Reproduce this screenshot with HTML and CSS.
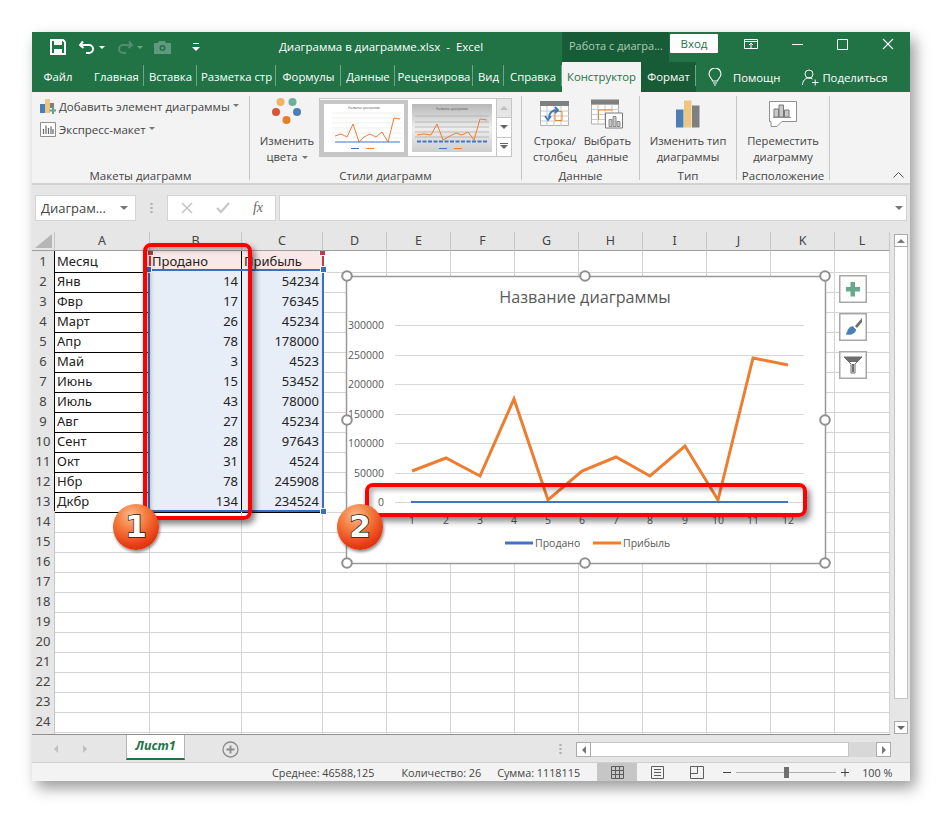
FILE: index.html
```html
<!DOCTYPE html>
<html lang="ru">
<head>
<meta charset="utf-8">
<title>Диаграмма в диаграмме.xlsx - Excel</title>
<link rel="stylesheet" href="styles.css">
</head>
<body>
<div class="window">
  <header class="titlebar">
    <div class="qat">
      <svg class="qi save" width="16" height="16" viewBox="0 0 16 16"><path d="M1 1h12l2 2v12H1z" fill="none" stroke="#fff" stroke-width="2"/><path d="M4 1h8v5H4zM4 10h8v5H4z" fill="#fff"/></svg>
      <svg class="qi undo" width="16" height="14" viewBox="0 0 16 14"><path d="M4 1.500 1 5l3.500 3M1.500 5H10a4 4 0 0 1 0 8H7" fill="none" stroke="#fff" stroke-width="2"/></svg>
      <span class="caret c1"></span>
      <svg class="qi redo" width="16" height="14" viewBox="0 0 16 14"><path d="M12 1.500 15 5l-3.500 3M14.500 5H6a4 4 0 0 0 0 8h3" fill="none" stroke="#4f8f6d" stroke-width="2"/></svg>
      <span class="caret c2"></span>
      <svg class="qi cam" width="17" height="13" viewBox="0 0 17 13"><path d="M0 2h4l1-2h6l1 2h5v11H0z" fill="#5f9a7c"/><circle cx="8.500" cy="7" r="3" fill="#217346"/><circle cx="8.500" cy="7" r="1.500" fill="#5f9a7c"/></svg>
      <svg class="qi cust" width="8" height="9" viewBox="0 0 8 9"><path d="M1 .5h6" stroke="#fff"/><path d="M0 4h8L4 8z" fill="#fff"/></svg>
    </div>
    <div class="doc">Диаграмма в диаграмме.xlsx&nbsp; -&nbsp; Excel</div>
    <div class="context">Работа с диагра...</div>
    <button class="login">Вход</button>
    <div class="winctl">
      <svg width="14" height="11" viewBox="0 0 14 11"><path d="M.5.500h13v9H.5zM.5 2.500h13M7 9V4M5 6l2-2 2 2" fill="none" stroke="#fff"/></svg>
      <svg width="11" height="3" viewBox="0 0 11 3"><path d="M0 1.500h11" stroke="#fff"/></svg>
      <svg width="11" height="11" viewBox="0 0 11 11"><path d="M.5.500h10v10H.5z" fill="none" stroke="#fff"/></svg>
      <svg width="12" height="12" viewBox="0 0 12 12"><path d="M1 1l10 10M11 1 1 11" stroke="#fff" stroke-width="1.100"/></svg>
    </div>
  </header>

  <nav class="tabs">
    <div class="tab">Файл</div>
    <div class="tab sep main">Главная</div>
    <div class="tab sep">Вставка</div>
    <div class="tab sep">Разметка стр</div>
    <div class="tab sep">Формулы</div>
    <div class="tab sep">Данные</div>
    <div class="tab sep">Рецензирова</div>
    <div class="tab sep">Вид</div>
    <div class="tab sep">Справка</div>
    <div class="tab active">Конструктор</div>
    <div class="tab sep dark">Формат</div>
    <div class="help">
      <svg width="14" height="18" viewBox="0 0 14 18"><path d="M4.500 13c0-2-3.500-3.500-3.500-7a6 6 0 0 1 12 0c0 3.500-3.500 5-3.500 7zM5 15h4M6 17h2" fill="none" stroke="#fff" stroke-width="1.100"/></svg>
      <span class="helpt">Помощн</span>
      <svg class="person" width="17" height="17" viewBox="0 0 17 17"><circle cx="7" cy="5" r="4" fill="none" stroke="#fff"/><path d="M.5 16c0-4 2.500-7 6.500-7 1.500 0 2.500.4 3.500 1M10 13.500h6.500M13.200 10.500v6" fill="none" stroke="#fff"/></svg>
      <span>Поделиться</span>
    </div>
  </nav>

  <section class="ribbon">
    <div class="group g1">
      <div class="gbody stack">
        <div class="rline">
          <svg width="16" height="15" viewBox="0 0 16 15"><path d="M0 5h5v9H0z" fill="#4a7fb5"/><path d="M5 0h5v14H5z" fill="#edc77f"/><path d="M10 4h4v5h-4z" fill="#7f7f7f"/><path d="M12 8h2v2.500h2.500v2H14V15h-2v-2.500H9.500v-2H12z" fill="#5ea58a"/></svg>
          <span>Добавить элемент диаграммы</span><span class="dd"></span>
        </div>
        <div class="rline">
          <svg width="16" height="15" viewBox="0 0 16 15"><path d="M.5.500h15v14H.5z" fill="#fff" stroke="#8f8f8f"/><path d="M3.500 12V7M6 12V3.500M8.500 12V6M11 12V4.500M13 12V7" stroke="#666" stroke-width="1.200"/></svg>
          <span>Экспресс-макет</span><span class="dd"></span>
        </div>
      </div>
      <div class="glabel">Макеты диаграмм</div>
    </div>
    <div class="group g2">
      <div class="gbody row2">
        <div class="bigbtn colors">
          <svg width="30" height="28" viewBox="0 0 30 28"><circle cx="8.500" cy="5" r="4" fill="#edb465"/><circle cx="20.500" cy="5" r="4" fill="#6fae9a"/><circle cx="4" cy="15" r="4" fill="#d9553a"/><circle cx="25" cy="15" r="4" fill="#4a7fb5"/><circle cx="14.500" cy="23" r="4" fill="#e87d25"/></svg>
          <span class="lab">Изменить<br>цвета<span class="dd"></span></span>
        </div>
        <div class="gallery">
          <div class="thumb sel">
            <svg width="80" height="48" viewBox="0 0 80 48"><rect width="80" height="48" fill="#fff"/><text class="tiny" x="40" y="5">Название диаграммы</text><path d="M8 9h70M8 14h70M8 19h70M8 24h70M8 29h70M8 34h70" stroke="#e6e6e6" stroke-width=".6"/><polyline points="11,32 17,30 23,33 29,20 35,38 40,33 46,30 52,33 58,28 64,38 70,14 76,15" fill="none" stroke="#ed7d31" stroke-width="1"/><path d="M11 38h65" stroke="#4472c4"/><path d="M27 44.500h8" stroke="#4472c4"/><path d="M42 44.500h8" stroke="#ed7d31"/></svg>
          </div>
          <div class="thumb">
            <svg width="80" height="48" viewBox="0 0 80 48"><defs><linearGradient id="tg" x1="0" x2="0" y1="0" y2="1"><stop offset="0" stop-color="#b8b8b8"/><stop offset=".5" stop-color="#eeeeee"/><stop offset="1" stop-color="#cdcdcd"/></linearGradient></defs><rect width="80" height="48" fill="url(#tg)"/><text class="tiny" x="40" y="6">Название диаграммы</text><path d="M3 12h74M3 18h74M3 23h74M3 28h74M3 33h74" stroke="#a6a6a6" stroke-width=".7"/><polyline points="5,31 12,30 19,31 25,20 31,36 38,32 44,29 50,31 56,28 62,36 68,15 75,16" fill="none" stroke="#ed7d31" stroke-width="1"/><path d="M5 37.500h70" stroke="#4472c4" stroke-width="2" stroke-dasharray="4 1.500"/><path d="M27 44.500h8" stroke="#4472c4"/><path d="M42 44.500h8" stroke="#ed7d31"/></svg>
          </div>
          <div class="gscroll">
            <span class="gs off"><i class="up"></i></span>
            <span class="gs"><i class="down"></i></span>
            <span class="gs more"><i class="down"></i></span>
          </div>
        </div>
      </div>
      <div class="glabel">Стили диаграмм</div>
    </div>
    <div class="group g3">
      <div class="gbody row2 data">
        <div class="bigbtn">
          <svg width="30" height="26" viewBox="0 0 30 26"><path d="M.5 4.500h28v20H.5z" fill="#fff" stroke="#b0b0b0"/><path d="M0 0h29v5H0z" fill="#7f7f7f"/><path d="M1 10h28M1 15h28M1 20h28M7 5v20M14 5v20M21 5v20" stroke="#c8c8c8"/><path d="M15 10.500h7v9h-7z" fill="none" stroke="#e8862c"/><path d="M9 17c0-5 3-8 9-8M15 6l3 3-3 3M5 15l3 4 3-4" fill="none" stroke="#3f78b5" stroke-width="1.800"/></svg>
          <span class="lab">Строка/<br>столбец</span>
        </div>
        <div class="bigbtn">
          <svg width="32" height="29" viewBox="0 0 32 29"><path d="M.5 4.500h27v20H.5z" fill="#fff" stroke="#b0b0b0"/><path d="M0 0h28v5H0z" fill="#7f7f7f"/><path d="M1 10h27M1 15h27M1 20h27M7 5v20M14 5v20M21 5v20" stroke="#c8c8c8"/><path d="M7.500 20.500v-10h14" fill="none" stroke="#e8862c"/><path d="M14.500 13.500h17v15h-17z" fill="#fff" stroke="#777"/><path d="M18 27V20h3v7zM22 27V17h3v10zM26 27v-5h3v5z" fill="#c9c9c9" stroke="#777" stroke-width=".8"/></svg>
          <span class="lab">Выбрать<br>данные</span>
        </div>
      </div>
      <div class="glabel">Данные</div>
    </div>
    <div class="group g4">
      <div class="gbody row2">
        <div class="bigbtn">
          <svg width="24" height="27" viewBox="0 0 24 27"><path d="M0 9h7.500v18H0z" fill="#4a7fb5"/><path d="M8 0h7.500v27H8z" fill="#edc77f"/><path d="M16 5h7.500v22H16z" fill="#7f7f7f"/></svg>
          <span class="lab">Изменить тип<br>диаграммы</span>
        </div>
      </div>
      <div class="glabel">Тип</div>
    </div>
    <div class="group g5">
      <div class="gbody row2">
        <div class="bigbtn">
          <svg width="28" height="26" viewBox="0 0 28 26"><path d="M.5.500h27v20H13l-5 5H2v-5H.5z" fill="#fff" stroke="#8f8f8f"/><path d="M5 16V8h4.500v8zM10 16V4h4.500v12zM15.500 16V9H20v7z" fill="#c9c9c9" stroke="#777"/><path d="M4 16.500h18" stroke="#8f8f8f"/></svg>
          <span class="lab">Переместить<br>диаграмму</span>
        </div>
      </div>
      <div class="glabel">Расположение</div>
    </div>
    <svg class="collapse" width="11" height="6" viewBox="0 0 11 6"><path d="M.5 5.500 5.500.500l5 5" fill="none" stroke="#555"/></svg>
  </section>

  <div class="fbar">
    <div class="namebox"><span>Диаграм...</span><i class="down big"></i></div>
    <div class="vdots"></div>
    <div class="fbtns">
      <svg width="12" height="12" viewBox="0 0 12 12"><path d="M1 1l10 10M11 1 1 11" stroke="#c4c4c4" stroke-width="1.500"/></svg>
      <svg width="14" height="12" viewBox="0 0 14 12"><path d="M1 6l4 4 8-9" fill="none" stroke="#c4c4c4" stroke-width="2"/></svg>
      <span class="fx">fx</span>
    </div>
    <div class="finput"><i class="down big"></i></div>
  </div>

  <div class="sheet">
    <div class="grid">
      <div class="row head"><b class="corner"><i></i></b><b>A</b><b>B</b><b>C</b><b>D</b><b>E</b><b>F</b><b>G</b><b>H</b><b>I</b><b>J</b><b>K</b><b>L</b></div>
      <div class="row"><b class="blk">1</b><i class="k">Месяц</i><i class="k p">Продано</i><i class="k p">Прибыль</i><i></i><i></i><i></i><i></i><i></i><i></i><i></i><i></i><i></i></div>
      <div class="row"><b class="blk">2</b><i class="k">Янв</i><i class="k s n">14</i><i class="k s n">54234</i><i></i><i></i><i></i><i></i><i></i><i></i><i></i><i></i><i></i></div>
      <div class="row"><b class="blk">3</b><i class="k">Фвр</i><i class="k s n">17</i><i class="k s n">76345</i><i></i><i></i><i></i><i></i><i></i><i></i><i></i><i></i><i></i></div>
      <div class="row"><b class="blk">4</b><i class="k">Март</i><i class="k s n">26</i><i class="k s n">45234</i><i></i><i></i><i></i><i></i><i></i><i></i><i></i><i></i><i></i></div>
      <div class="row"><b class="blk">5</b><i class="k">Апр</i><i class="k s n">78</i><i class="k s n">178000</i><i></i><i></i><i></i><i></i><i></i><i></i><i></i><i></i><i></i></div>
      <div class="row"><b class="blk">6</b><i class="k">Май</i><i class="k s n">3</i><i class="k s n">4523</i><i></i><i></i><i></i><i></i><i></i><i></i><i></i><i></i><i></i></div>
      <div class="row"><b class="blk">7</b><i class="k">Июнь</i><i class="k s n">15</i><i class="k s n">53452</i><i></i><i></i><i></i><i></i><i></i><i></i><i></i><i></i><i></i></div>
      <div class="row"><b class="blk">8</b><i class="k">Июль</i><i class="k s n">43</i><i class="k s n">78000</i><i></i><i></i><i></i><i></i><i></i><i></i><i></i><i></i><i></i></div>
      <div class="row"><b class="blk">9</b><i class="k">Авг</i><i class="k s n">27</i><i class="k s n">45234</i><i></i><i></i><i></i><i></i><i></i><i></i><i></i><i></i><i></i></div>
      <div class="row"><b class="blk">10</b><i class="k">Сент</i><i class="k s n">28</i><i class="k s n">97643</i><i></i><i></i><i></i><i></i><i></i><i></i><i></i><i></i><i></i></div>
      <div class="row"><b class="blk">11</b><i class="k">Окт</i><i class="k s n">31</i><i class="k s n">4524</i><i></i><i></i><i></i><i></i><i></i><i></i><i></i><i></i><i></i></div>
      <div class="row"><b class="blk">12</b><i class="k">Нбр</i><i class="k s n">78</i><i class="k s n">245908</i><i></i><i></i><i></i><i></i><i></i><i></i><i></i><i></i><i></i></div>
      <div class="row"><b class="blk">13</b><i class="k">Дкбр</i><i class="k s n">134</i><i class="k s n">234524</i><i></i><i></i><i></i><i></i><i></i><i></i><i></i><i></i><i></i></div>
      <div class="row"><b>14</b><i></i><i></i><i></i><i></i><i></i><i></i><i></i><i></i><i></i><i></i><i></i><i></i></div>
      <div class="row"><b>15</b><i></i><i></i><i></i><i></i><i></i><i></i><i></i><i></i><i></i><i></i><i></i><i></i></div>
      <div class="row"><b>16</b><i></i><i></i><i></i><i></i><i></i><i></i><i></i><i></i><i></i><i></i><i></i><i></i></div>
      <div class="row"><b>17</b><i></i><i></i><i></i><i></i><i></i><i></i><i></i><i></i><i></i><i></i><i></i><i></i></div>
      <div class="row"><b>18</b><i></i><i></i><i></i><i></i><i></i><i></i><i></i><i></i><i></i><i></i><i></i><i></i></div>
      <div class="row"><b>19</b><i></i><i></i><i></i><i></i><i></i><i></i><i></i><i></i><i></i><i></i><i></i><i></i></div>
      <div class="row"><b>20</b><i></i><i></i><i></i><i></i><i></i><i></i><i></i><i></i><i></i><i></i><i></i><i></i></div>
      <div class="row"><b>21</b><i></i><i></i><i></i><i></i><i></i><i></i><i></i><i></i><i></i><i></i><i></i><i></i></div>
      <div class="row"><b>22</b><i></i><i></i><i></i><i></i><i></i><i></i><i></i><i></i><i></i><i></i><i></i><i></i></div>
      <div class="row"><b>23</b><i></i><i></i><i></i><i></i><i></i><i></i><i></i><i></i><i></i><i></i><i></i><i></i></div>
      <div class="row"><b>24</b><i></i><i></i><i></i><i></i><i></i><i></i><i></i><i></i><i></i><i></i><i></i><i></i></div>
      <div class="row"><b></b><i></i><i></i><i></i><i></i><i></i><i></i><i></i><i></i><i></i><i></i><i></i><i></i></div>
    </div>
    <div class="vscroll">
      <span class="vbtn"><i class="up"></i></span>
      <span class="vthumb"></span>
      <span class="vbtn"><i class="down"></i></span>
    </div>

    <div class="range-red"><u class="h tl"></u><u class="h tr"></u></div>
    <div class="range-blue"><u class="h tl"></u><u class="h tr"></u><u class="h br"></u></div>

    <svg class="chart" width="480" height="288" viewBox="346 276 480 288">
      <rect x="346.500" y="276.500" width="479" height="287" fill="#fff" stroke="#999" stroke-width="1.500"/>
      <text class="ctitle" x="585" y="303">Название диаграммы</text>
      <path d="M395 325.500h409M395 355.500h409M395 384.500h409M395 414.500h409M395 443.500h409M395 473.500h409M395 502.500h409" stroke="#d9d9d9"/>
      <g class="ylab">
        <text x="384" y="329">300000</text><text x="384" y="359">250000</text><text x="384" y="388">200000</text><text x="384" y="418">150000</text><text x="384" y="447">100000</text><text x="384" y="477">50000</text><text x="384" y="506">0</text>
      </g>
      <g class="xlab">
        <text x="412" y="524">1</text><text x="446" y="524">2</text><text x="480" y="524">3</text><text x="514" y="524">4</text><text x="548" y="524">5</text><text x="582" y="524">6</text><text x="616" y="524">7</text><text x="650" y="524">8</text><text x="685" y="524">9</text><text x="718" y="524">10</text><text x="753" y="524">11</text><text x="788" y="524">12</text>
      </g>
      <polyline points="412,471 446,458 480,476 514,399 548,500 582,471 616,457 650,476 685,446 718,500 753,358 788,365" fill="none" stroke="#ed7d31" stroke-width="3"/>
      <path d="M411 502h377" stroke="#4472c4" stroke-width="2.200"/>
      <path d="M505 543h28" stroke="#4472c4" stroke-width="3"/>
      <text class="leg" x="535" y="547">Продано</text>
      <path d="M593 543h28" stroke="#ed7d31" stroke-width="3"/>
      <text class="leg" x="623" y="547">Прибыль</text>
      <g fill="#fff" stroke="#8f8f8f" stroke-width="2">
        <circle cx="347" cy="276" r="4.800"/><circle cx="585" cy="276" r="4.800"/><circle cx="825" cy="276" r="4.800"/>
        <circle cx="347" cy="420" r="4.800"/><circle cx="825" cy="420" r="4.800"/>
        <circle cx="347" cy="563" r="4.800"/><circle cx="585" cy="563" r="4.800"/><circle cx="825" cy="563" r="4.800"/>
      </g>
    </svg>

    <div class="sidebtns">
      <span class="sbtn"><svg width="16" height="16" viewBox="0 0 16 16"><path d="M5.500 1h4.500v5h5v4.500h-5v5H5.500v-5H1V6h4.500z" fill="#67a98f"/></svg></span>
      <span class="sbtn"><svg width="20" height="20" viewBox="0 0 20 20"><path d="M19 1l-7 8 2 2 5-6z" fill="#6d6d6d"/><path d="M11 9.500c-4-1-6 2-8 8 5 1 10-1 10-5z" fill="#4a7fb5"/><path d="M10.500 9.500l3 3" stroke="#fff"/></svg></span>
      <span class="sbtn"><svg width="20" height="18" viewBox="0 0 20 18"><path d="M1 1h18l-7 7v9H8V8z" fill="#fff" stroke="#6d6d6d"/><path d="M1 1h18l-5 5H6z" fill="#6d6d6d"/><path d="M9 8h2v8H9z" fill="#6d6d6d"/></svg></span>
    </div>

    <div class="mark m1"></div>
    <div class="mark m2"></div>
    <div class="badge b1">1</div>
    <div class="badge b2">2</div>
  </div>

  <div class="sheetbar">
    <i class="left nav1"></i>
    <i class="right nav2"></i>
    <div class="sheettab">Лист1</div>
    <svg class="addsheet" width="17" height="17" viewBox="0 0 17 17"><circle cx="8.500" cy="8.500" r="7.500" fill="none" stroke="#8a8a8a" stroke-width="1.300"/><path d="M8.500 4.500v8M4.500 8.500h8" stroke="#8a8a8a" stroke-width="1.800"/></svg>
    <div class="vdots dots2"></div>
    <div class="hscroll">
      <span class="hbtn"><i class="left"></i></span>
      <span class="hthumb"></span>
      <span class="hbtn"><i class="right"></i></span>
    </div>
  </div>

  <footer class="status">
    <span class="st avg">Среднее: 46588,125</span>
    <span class="st cnt">Количество: 26</span>
    <span class="st sum">Сумма: 1118115</span>
    <span class="vw on"><svg width="13" height="13" viewBox="0 0 13 13"><path d="M.5.500h12v12H.5zM4.500.5v12M8.500.5v12M.5 4.500h12M.5 8.500h12" fill="none" stroke="#5c5c5c"/></svg></span>
    <span class="vw"><svg width="13" height="13" viewBox="0 0 13 13"><path d="M.5.500h12v12H.5zM3 3.500h7M3 6.500h7M3 9.500h7" fill="none" stroke="#5c5c5c"/></svg></span>
    <span class="vw"><svg width="14" height="13" viewBox="0 0 14 13"><path d="M.5.500h13v12H.5zM.5 7.500h7V.5" fill="none" stroke="#5c5c5c"/></svg></span>
    <svg class="zoomer" width="127" height="13" viewBox="0 0 127 13"><path d="M0 6.500h8M118 6.500h8M122 2.500v8" stroke="#444"/><path d="M13 6.500h100" stroke="#b0b0b0"/><path d="M61 1h5v11h-5z" fill="#707070"/></svg>
    <span class="st pct">100 %</span>
  </footer>
</div>
</body>
</html>
```

FILE: styles.css
```css
* { box-sizing: border-box; }
html, body { margin: 0; height: 100%; background: #fff; }
body { padding: 32px 32px 0; font-family: "Open Sans", "Noto Sans", sans-serif; font-size: 12px; color: #444; }
i, b, u { font-style: normal; font-weight: 400; text-decoration: none; }

.window { width: 878px; height: 749px; display: flex; flex-direction: column; background: #e6e6e6; box-shadow: 5px 7px 14px rgba(0,0,0,.4); }

/* title bar */
.titlebar { height: 30px; flex: none; display: flex; background: #217346; color: #fff; }
.qat { width: 247px; position: relative; flex: none; display: flex; align-items: center; padding-left: 18px; }
.qi { flex: none; }
.save { margin-right: 13px; }
.undo { margin-right: 4px; }
.c1 { margin-right: 12px; }
.redo { margin-right: 4px; }
.c2 { margin-right: 11px; opacity: .35; }
.cam { margin-right: 21px; }
.caret { flex: none; width: 0; height: 0; border: 3px solid transparent; border-top: 3px solid #fff; border-bottom: 0; }
.doc { width: 283px; flex: none; font-size: 11.500px; line-height: 30px; white-space: nowrap; }
.context { width: 107px; flex: none; background: #185c37; color: #a9cdb9; font-size: 11px; line-height: 27px; padding-left: 7px; white-space: nowrap; }
.login { width: 48px; height: 19px; margin: 2px 0 0 1px; flex: none; background: #fff; border: 0; border-radius: 1px; color: #217346; font: 11.500px "Open Sans", sans-serif; padding: 0; }
.winctl { flex: 1; display: flex; align-items: center; padding: 0 16px 6px 26px; justify-content: space-between; }

/* tabs */
.tabs { height: 30px; flex: none; display: grid; grid-template-columns: 52px 60px 53px 79px 65px 54px 78px 31px 58px 79px 55px 1fr; background: #217346; color: #fff; font-size: 11.300px; }
.tab { line-height: 30px; text-align: center; white-space: nowrap; overflow: hidden; position: relative; }
.main { padding-left: 5px; }
.sep::after { content: ""; position: absolute; right: 0; top: 3px; height: 21px; width: 1px; background: #6fa58a; }
.active { background: #f3f3f3; color: #217346; }
.dark { background: #185c37; }
.help { display: flex; align-items: center; padding-left: 12px; white-space: nowrap; }
.helpt { margin-left: 11px; }
.person { margin: 0 3px 0 22px; }

/* ribbon */
.ribbon { height: 93px; flex: none; display: flex; padding-top: 4px; background: #f3f3f3; border-bottom: 2px solid #d2d2d2; position: relative; color: #444; font-size: 11.500px; }
.group { display: flex; flex-direction: column; height: 84px; border-right: 1px solid #c6c6c6; flex: none; }
.g1 { width: 218px; }
.g2 { width: 272px; }
.g3 { width: 118px; }
.g4 { width: 97px; }
.g5 { width: 93px; }
.gbody { flex: 1; min-height: 0; }
.glabel { text-align: center; line-height: 14px; height: 14px; margin-bottom: -3px; white-space: nowrap; }
.stack { padding: 0 0 0 8px; margin-top: -1px; }
.rline { display: flex; align-items: center; gap: 3px; height: 23px; white-space: nowrap; }
.dd { display: inline-block; width: 0; height: 0; margin: 0 0 2px 4px; vertical-align: middle; border: 3px solid transparent; border-top-color: #777; border-bottom: 0; }
.rline .dd { margin-left: 0; }
.row2 { display: flex; justify-content: center; }
.bigbtn { display: flex; flex-direction: column; align-items: center; white-space: nowrap; text-align: center; }
.bigbtn > svg { height: 30px; margin-top: 3px; }
.lab { margin-top: 4px; line-height: 16px; font-size: 11.200px; }
.g2 .row2 { justify-content: flex-start; }
.colors { width: 69px; padding-left: 5px; }
.colors > svg { margin-top: 1px; height: 28px; }
.colors .lab { margin-top: 8px; }
.data { gap: 7px; padding-left: 3px; }
.gallery { width: 193px; height: 59px; margin: 2px 0 0 0; display: flex; align-items: center; border: 1px solid #c6c6c6; background: #fff; position: relative; padding-left: 4px; gap: 8px; }
.thumb { width: 80px; height: 48px; flex: none; line-height: 0; }
.thumb.sel { outline: 4px solid #c6c6c6; }
.tiny { font-size: 3px; text-anchor: middle; fill: #555; }
.gscroll { position: absolute; right: 0; top: 0; bottom: 0; width: 15px; display: flex; flex-direction: column; border-left: 1px solid #c6c6c6; }
.gs { flex: 1; display: flex; align-items: center; justify-content: center; border-bottom: 1px solid #c6c6c6; background: #fff; }
.gs:last-child { border-bottom: 0; }
.gs.off { background: #e6e6e6; }
.collapse { position: absolute; right: 6px; top: 80px; }
.up, .down, .left, .right { display: block; width: 0; height: 0; border: 3px solid transparent; }
.up { border-bottom: 4px solid #777; border-top: 0; border-left-width: 4px; border-right-width: 4px; }
.down { border-top: 4px solid #666; border-bottom: 0; border-left-width: 4px; border-right-width: 4px; }
.left { border-right: 4px solid #777; border-left: 0; border-top-width: 4px; border-bottom-width: 4px; }
.right { border-left: 4px solid #777; border-right: 0; border-top-width: 4px; border-bottom-width: 4px; }
.gs.off .up { border-bottom-color: #c0c0c0; }
.more { position: relative; }
.more::before { content: ""; position: absolute; left: 3px; top: 5px; width: 8px; height: 1px; background: #666; }

/* formula bar */
.fbar { height: 47px; flex: none; display: flex; padding: 10px 3px 11px 3px; background: #e6e6e6; }
.namebox { width: 101px; background: #fff; border: 1px solid #d4d4d4; display: flex; align-items: center; justify-content: space-between; padding: 0 7px 0 5px; font-size: 13px; color: #444; }
.down.big { border-top-color: #777; border-left-width: 4px; border-right-width: 4px; }
.vdots { width: 31px; flex: none; background: radial-gradient(circle, #b0b0b0 1px, transparent 1.300px) center / 3px 4px repeat-y; margin: 6px 0; }
.fbtns { width: 109px; flex: none; display: flex; align-items: center; background: #fff; border: 1px solid #d4d4d4; padding: 0 12px 0 13px; justify-content: space-between; }
.fx { font: italic 400 14px "Liberation Serif", serif; color: #666; }
.finput { flex: 1; margin-left: 3px; background: #fff; border: 1px solid #d4d4d4; display: flex; align-items: center; justify-content: flex-end; padding-right: 3px; }

/* sheet */
.sheet { height: 503px; flex: none; display: flex; position: relative; }
.grid { width: 858px; flex: none; height: 503px; overflow: hidden; background: #fff; border-bottom: 1px solid #8f8f8f; }
.row { display: grid; grid-template-columns: 23px 95px 92px 81px repeat(8, 64px) 55px; height: 20px; font-family: "Noto Sans", "Open Sans", sans-serif; font-size: 13px; color: #222; }
.row > b { background: #e6e6e6; border-right: 1px solid #c6c6c6; border-bottom: 1px solid #c6c6c6; text-align: center; line-height: 21px; color: #444; font-size: 13px; }
.row > i { display: block; border-right: 1px solid #d4d4d4; border-bottom: 1px solid #d4d4d4; line-height: 21px; padding: 0 2px; white-space: nowrap; overflow: visible; }
.head { height: 19px; }
.head > b { line-height: 18px; font-size: 12.500px; border-bottom-color: #9f9f9f; }
.row > b.blk { border-right-color: #000; }
.corner { position: relative; }
.corner i { position: absolute; right: 2px; bottom: 2px; width: 0; height: 0; border-left: 17px solid transparent; border-bottom: 14px solid #b6b6b6; }
.row > i.k { border-color: #000; }
.row > i.p { background: #f9e8e8; border-right-color: #000; }
.row > i.s { background: #e8eef8; }
.row > i.n { text-align: right; padding-right: 3px; }

.vscroll { flex: 1; display: flex; flex-direction: column; padding: 2px 2px 0 4px; }
.vbtn { height: 13px; background: #fff; border: 1px solid #ababab; flex: none; display: flex; align-items: center; justify-content: center; }
.vthumb { height: 452px; margin-bottom: 22px; flex: none; background: #fff; border: 1px solid #c6c6c6; border-top: 0; }

.range-red, .range-blue { position: absolute; pointer-events: none; }
.range-red { left: 117px; top: 19px; width: 175px; height: 20px; border: solid #b8404a; border-width: 0 2px; }
.range-blue { left: 116px; top: 37px; width: 176px; height: 243px; border: 2px solid #3a6fc0; }
.h { position: absolute; width: 7px; height: 7px; background: #3a6fc0; border: 1px solid #fff; }
.range-blue .tl { left: -5px; top: -5px; }
.range-blue .tr { right: -5px; top: -5px; }
.range-blue .br { right: -5px; bottom: -5px; }
.range-red .h { background: #b8404a; height: 5px; border-top: 0; }
.range-red .tl { left: -4px; top: 0; }
.range-red .tr { right: -4px; top: 0; }

.chart { position: absolute; left: 314px; top: 44px; overflow: visible; font-family: "Open Sans", sans-serif; }
.ctitle { font-size: 16.200px; fill: #595959; text-anchor: middle; }
.ylab text { font-size: 10.500px; fill: #595959; text-anchor: end; }
.xlab text { font-size: 10.500px; fill: #595959; text-anchor: middle; }
.leg { font-size: 10.500px; fill: #595959; }

.sidebtns { position: absolute; left: 807px; top: 43px; display: flex; flex-direction: column; gap: 10px; }
.sbtn { width: 28px; height: 28px; background: #fff; border: 1px solid #a8a8a8; box-shadow: inset 0 0 0 .5px #a8a8a8; display: flex; align-items: center; justify-content: center; }

.mark { position: absolute; border: 4px solid #f00; border-radius: 8px; box-shadow: 3px 4px 6px rgba(0,0,0,.5), inset 3px 3px 5px rgba(0,0,0,.3); }
.m1 { left: 111px; top: 11px; width: 109px; height: 277px; }
.m2 { left: 333px; top: 251px; width: 442px; height: 34px; }
.badge { position: absolute; top: 272px; width: 46px; height: 46px; border-radius: 50%; text-align: center; font: 700 31px/45px "DejaVu Sans", sans-serif; color: #fff; -webkit-text-stroke: 1.500px #222; paint-order: stroke fill; background: radial-gradient(circle at 40% 25%, #fbb98c 0, #f47a3c 35%, #e83a12 70%, #c81a00 100%); box-shadow: 1px 2px 3px rgba(0,0,0,.45); }
.b1 { left: 81px; }
.b2 { left: 305px; }

/* sheet tabs */
.sheetbar { height: 28px; flex: none; display: flex; align-items: flex-start; background: #e6e6e6; position: relative; border-bottom: 1px solid #d0d0d0; }
.nav1 { margin: 10px 0 0 22px; border-right-color: #c0c0c0; }
.nav2 { margin: 10px 0 0 25px; border-left-color: #c0c0c0; }
.sheettab { margin-left: 39px; width: 59px; height: 25px; background: #fff; border: solid #b5b5b5; border-width: 0 1px; border-bottom: 2px solid #217346; text-align: center; color: #217346; font-weight: 700; font-style: italic; line-height: 22px; font-size: 12.500px; }
.addsheet { margin: 6px 0 0 37px; }
.dots2 { position: absolute; left: 525px; top: 7px; width: 6px; height: 14px; margin: 0; }
.hscroll { position: absolute; left: 544px; top: 7px; width: 315px; height: 15px; display: flex; background: #d8d8d8; }
.hbtn { width: 15px; height: 15px; background: #fff; border: 1px solid #ababab; display: flex; align-items: center; justify-content: center; flex: none; }
.hthumb { width: 258px; background: #fff; border: solid #c6c6c6; border-width: 1px 1px 1px 0; margin-right: 27px; flex: none; }

/* status */
.status { flex: 1; display: flex; align-items: center; background: #f3f3f3; font-size: 10.800px; color: #444; white-space: nowrap; padding-left: 240px; }
.cnt { margin-left: 27px; }
.sum { margin-left: 16px; width: 100px; }
.vw { width: 40px; height: 18px; display: flex; align-items: center; justify-content: center; flex: none; }
.vw.on { background: #c6c6c6; }
.zoomer { margin-left: 6px; flex: none; }
.pct { margin-left: 12px; }
```
